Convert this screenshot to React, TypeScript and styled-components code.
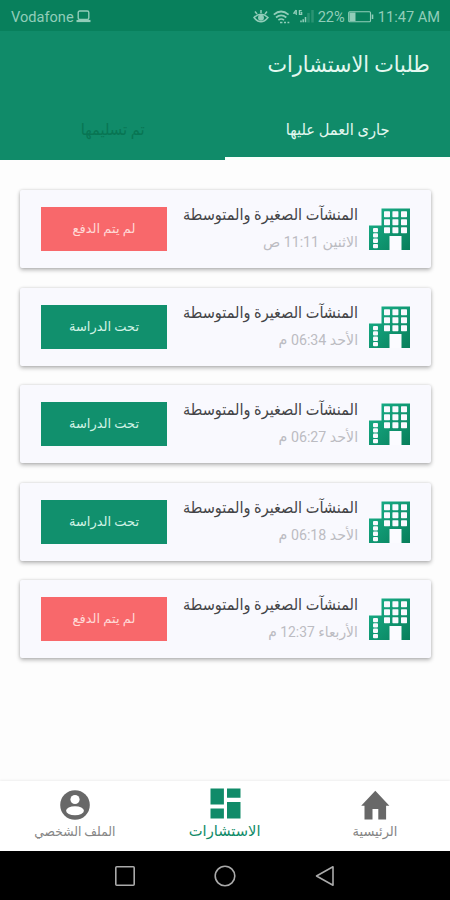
import React from 'react';
import styled, { createGlobalStyle } from 'styled-components';

const GlobalStyle = createGlobalStyle`
  * { box-sizing: border-box; }
  body { margin: 0; background: #fdfdfd; }
`;

const Screen = styled.div`
  width: 450px;
  height: 900px;
  display: flex;
  flex-direction: column;
  overflow: hidden;
  background: #fdfdfd;
  font-family: Roboto, 'DejaVu Sans', sans-serif;
`;

const StatusBar = styled.div`
  display: flex;
  align-items: center;
  justify-content: space-between;
  height: 31px;
  flex: none;
  padding: 2px 10px 0 11px;
  background: #08805c;
  color: #91cdb9;
  font-size: 14.6px;
`;

const StatusGroup = styled.div<{ $gap: number }>`
  display: flex;
  align-items: center;
  gap: ${(p) => p.$gap}px;
  white-space: nowrap;
`;

const Percent = styled.span`
  font-size: 14.6px;
`;

const Header = styled.header`
  height: 129px;
  flex: none;
  display: flex;
  flex-direction: column;
  background: #108b69;
`;

const TitleBar = styled.div`
  direction: rtl;
  height: 69px;
  display: flex;
  align-items: center;
  padding-right: 20px;
`;

const Tabs = styled.div`
  direction: rtl;
  display: grid;
  grid-template-columns: 225px 225px;
  height: 60px;
`;

const Tab = styled.div<{ $active?: boolean }>`
  display: flex;
  align-items: center;
  justify-content: center;
  padding-top: 3px;
  border-bottom: 3px solid ${(p) => (p.$active ? '#f6fffb' : 'transparent')};
`;

const Label = styled.span<{ $size: number; $color: string; $stretch?: number; $origin?: string }>`
  display: inline-block;
  direction: rtl;
  white-space: nowrap;
  line-height: 1.2;
  font-size: ${(p) => p.$size}px;
  color: ${(p) => p.$color};
  transform: scaleX(${(p) => p.$stretch ?? 1});
  transform-origin: ${(p) => p.$origin ?? 'center'};
`;

const List = styled.main`
  flex: 1;
  display: flex;
  flex-direction: column;
  gap: 19.5px;
  padding: 30px 19px 0 20px;
`;

const Card = styled.article`
  direction: rtl;
  display: flex;
  align-items: center;
  height: 78px;
  flex: none;
  padding: 0 21px;
  background: #f9f9fe;
  border-radius: 2px;
  box-shadow: 0 2px 4px rgba(0, 0, 0, 0.28), 0 0 3px rgba(0, 0, 0, 0.12);
`;

const CardText = styled.div`
  flex: 1;
  min-width: 0;
  display: flex;
  flex-direction: column;
  align-items: flex-start;
  gap: 10px;
  padding: 0 11px 1px 0;
`;

const Status = styled.div<{ $paid: boolean }>`
  display: flex;
  align-items: center;
  justify-content: center;
  width: 126px;
  height: 44px;
  flex: none;
  background: ${(p) => (p.$paid ? '#11906d' : '#f8686b')};
`;

const BottomNav = styled.nav`
  direction: rtl;
  display: grid;
  grid-template-columns: repeat(3, 150px);
  height: 70px;
  flex: none;
  background: #fff;
  box-shadow: 0 -1px 2px rgba(0, 0, 0, 0.06);
`;

const NavItem = styled.div<{ $active?: boolean }>`
  display: flex;
  flex-direction: column;
  align-items: center;
  gap: ${(p) => (p.$active ? 3 : 4)}px;
  padding-top: ${(p) => (p.$active ? 7 : 9)}px;
`;

const SystemBar = styled.div`
  display: flex;
  align-items: center;
  justify-content: center;
  gap: 78px;
  height: 49px;
  flex: none;
  background: #000;
`;

const BuildingIcon = styled.svg`
  flex: none;
`;

const Building = () => (
  <BuildingIcon width="41" height="42" viewBox="0 0 41 42">
    <defs>
      <linearGradient id="facade" x1="0" y1="0" x2="1" y2="1">
        <stop offset="0" stopColor="#19b28b" />
        <stop offset="1" stopColor="#087e5a" />
      </linearGradient>
    </defs>
    <path d="M12.500 .5H41V42H0V17.500H12.500Z" fill="url(#facade)" />
    {[3.2, 11.2, 19.2].map((y) =>
      [15, 23.4, 32].map((x) => (
        <rect key={`${x}-${y}`} x={x} y={y} width="6" height="6" rx=".6" fill="#f9f9fe" />
      )),
    )}
    {[20, 25.3, 30.6, 35.9].map((y) => (
      <rect key={y} x="4" y={y} width="5" height="4.3" rx="1" fill="#f9f9fe" />
    ))}
    <path d="M20.500 28h12v14h-12z" fill="#fbfbff" />
  </BuildingIcon>
);

const Laptop = () => (
  <svg width="15" height="13" viewBox="0 0 15 13" fill="none" stroke="currentColor">
    <rect x="2.2" y="1" width="10.6" height="8.4" rx="1.5" strokeWidth="1.4" />
    <path d="M.5 11h14" strokeWidth="2.2" />
  </svg>
);

const Eye = () => (
  <svg width="16" height="15" viewBox="0 0 16 15" fill="none" stroke="currentColor" strokeWidth="1.5">
    <path d="M1 8.500Q8 2 15 8.500Q8 17 1 8.500Z" />
    <circle cx="8" cy="8.700" r="2.200" fill="currentColor" />
    <path d="M8 4V1M4 5L2 2.500M12 5l2-2.500" />
  </svg>
);

const Wifi = () => (
  <svg width="17" height="14" viewBox="0 0 17 14" fill="none" stroke="currentColor" strokeWidth="1.7">
    <path d="M.8 4.600Q8 -1.600 15.600 4.600M3 7.500q5.200-4.300 10.300 0M5.400 10.100q2.800-2.200 5.600 0" />
    <path d="M7 12.500h2.400M11 12.500h2M14.500 12.500h1.800" />
  </svg>
);

const Signal = () => (
  <svg width="21" height="15" viewBox="0 0 21 15" fill="none" stroke="currentColor">
    <path d="M3 1L.8 4.200h3M3.300 1v5M8.700 1.600H6.400v3.800h2.300V3.600H7.500" strokeWidth="1.200" />
    <path d="M8 13.200v-1.800M10.200 13.200v-3M12.500 13.200V8" strokeWidth="1.500" />
    <path d="M15.500 13.500V4M19.500 13.500V1" strokeWidth="2.500" opacity=".25" />
  </svg>
);

const Battery = () => (
  <svg width="26" height="12" viewBox="0 0 26 12" fill="none" stroke="currentColor">
    <rect x=".7" y=".8" width="21.800" height="10" rx="1" strokeWidth="1.100" />
    <path d="M1.500 1.500h6v8.600h-6z" fill="currentColor" stroke="none" />
    <path d="M24.500 3.500v4.500" strokeWidth="1.600" />
  </svg>
);

const Home = () => (
  <svg width="30" height="30" viewBox="0 0 30 30" fill="#686868">
    <path d="M15.300 .8L1.200 15.800h3.300V29.500h8V19h5.800v10.500h7.800V15.800h3.300Z" />
  </svg>
);

const Dashboard = () => (
  <svg width="31" height="31" viewBox="0 0 31 31" fill="#108b69">
    <path d="M.5.5h13.400v16H.5zM17 .5h13.500v9.300H17zM.5 20.500h13.400v10H.5zM17 14h13.500v16.500H17z" />
  </svg>
);

const Person = () => (
  <svg width="30" height="30" viewBox="0 0 30 30">
    <circle cx="15" cy="15" r="14.800" fill="#686868" />
    <circle cx="15" cy="9.500" r="4.600" fill="#fff" />
    <ellipse cx="15" cy="20.700" rx="8.900" ry="4.500" fill="#fff" />
  </svg>
);

const requests = [
  { time: 'الاثنين 11:11 ص', paid: false, stretch: 0.98 },
  { time: 'الأحد 06:34 م', paid: true, stretch: 0.98 },
  { time: 'الأحد 06:27 م', paid: true, stretch: 0.98 },
  { time: 'الأحد 06:18 م', paid: true, stretch: 0.98 },
  { time: 'الأربعاء 12:37 م', paid: false, stretch: 0.955 },
];

export default function App() {
  return (
    <Screen>
      <GlobalStyle />
      <StatusBar>
        <StatusGroup $gap={2.5}>
          Vodafone
          <Laptop />
        </StatusGroup>
        <StatusGroup $gap={3.5}>
          <Eye />
          <Wifi />
          <Signal />
          <Percent>22%</Percent>
          <Battery />
          <span>11:47 AM</span>
        </StatusGroup>
      </StatusBar>
      <Header>
        <TitleBar>
          <Label $size={22} $color="#e4f8f0" $stretch={0.945} $origin="right">طلبات الاستشارات</Label>
        </TitleBar>
        <Tabs>
          <Tab $active>
            <Label $size={16} $color="#e2f7ef" $stretch={0.915}>جارى العمل عليها</Label>
          </Tab>
          <Tab>
            <Label $size={16} $color="#087553" $stretch={0.92}>تم تسليمها</Label>
          </Tab>
        </Tabs>
      </Header>
      <List>
        {requests.map((r) => (
          <Card key={r.time}>
            <Building />
            <CardText>
              <Label $size={16} $color="#444447" $stretch={0.907} $origin="right">المنشآت الصغيرة والمتوسطة</Label>
              <Label $size={14.5} $color="#bcbcc2" $stretch={r.stretch} $origin="right">{r.time}</Label>
            </CardText>
            <Status $paid={r.paid}>
              <Label $size={13} $color={r.paid ? '#d2f3e6' : '#ffd9d6'}>
                {r.paid ? 'تحت الدراسة' : 'لم يتم الدفع'}
              </Label>
            </Status>
          </Card>
        ))}
      </List>
      <BottomNav>
        <NavItem>
          <Home />
          <Label $size={13} $color="#858585">الرئيسية</Label>
        </NavItem>
        <NavItem $active>
          <Dashboard />
          <Label $size={15} $color="#108b69" $stretch={0.98}>الاستشارات</Label>
        </NavItem>
        <NavItem>
          <Person />
          <Label $size={13} $color="#858585" $stretch={0.945}>الملف الشخصي</Label>
        </NavItem>
      </BottomNav>
      <SystemBar>
        <svg width="22" height="22" viewBox="0 0 22 22" fill="none" stroke="#aaa" strokeWidth="1.600">
          <rect x="1.800" y="1.800" width="18.400" height="18.400" rx="1" />
        </svg>
        <svg width="22" height="22" viewBox="0 0 22 22" fill="none" stroke="#aaa" strokeWidth="1.600">
          <circle cx="11" cy="11" r="9.800" />
        </svg>
        <svg width="22" height="22" viewBox="0 0 22 22" fill="none" stroke="#aaa" strokeWidth="1.600">
          <path d="M19 1.800V20.200L2.500 11Z" strokeLinejoin="round" />
        </svg>
      </SystemBar>
    </Screen>
  );
}
